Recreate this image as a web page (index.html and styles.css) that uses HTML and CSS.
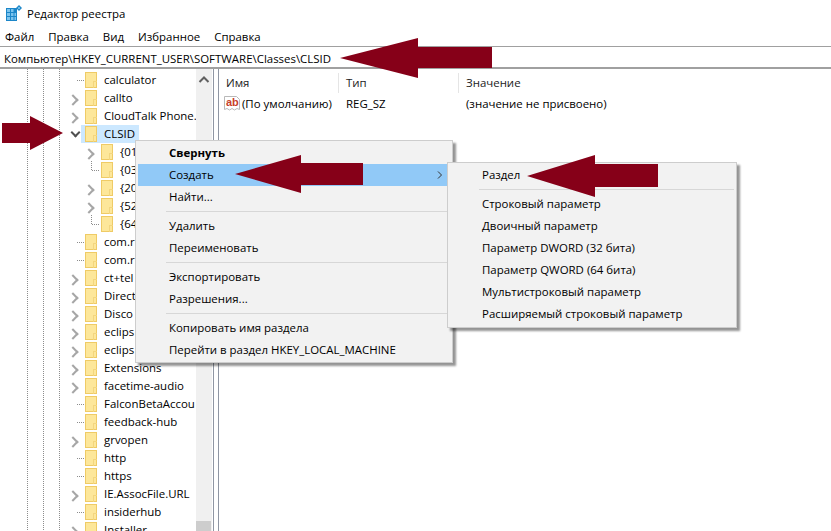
FILE: index.html
```html
<!DOCTYPE html>
<html lang="ru">
<head>
<meta charset="utf-8">
<title>Редактор реестра</title>
<link rel="stylesheet" href="styles.css">
</head>
<body>
<div class="app">
  <header class="titlebar">
    <svg class="appicon" width="16" height="16" viewBox="0 0 16 16"><path fill="#1c86c8" d="M0 3h11v13H0z"/><path fill="#7cc4ee" d="M1 4h3v3H1zM5 4h2.500v3H5zM1 8h3v3H1zM5 8h2.500v3H5zM8.500 8H10v3H8.500zM1 12h3v3H1zM5 12h2.500v3H5zM8.500 12H10v3H8.500z"/><path fill="#1c86c8" d="M13 0l3 3-3 3-3-3z"/><path fill="#8fd0f2" d="M13 1.700L14.300 3 13 4.300 11.700 3z"/></svg>
    <span>Редактор реестра</span>
  </header>
  <nav class="menubar"><span>Файл</span><span>Правка</span><span>Вид</span><span>Избранное</span><span>Справка</span></nav>
  <div class="address">Компьютер\HKEY_CURRENT_USER\SOFTWARE\Classes\CLSID</div>
  <main class="panes">
    <section class="tree">
      <div class="rows">
        <div class="row lvl0 leaf"><i class="folder"></i><span>calculator</span></div>
        <div class="row lvl0 more"><i class="folder"></i><span>callto</span></div>
        <div class="row lvl0 more"><i class="folder"></i><span>CloudTalk Phone.</span></div>
        <div class="row lvl0 open"><i class="folder"></i><span class="sel">CLSID</span></div>
        <div class="row lvl1 more"><i class="folder"></i><span>{01</span></div>
        <div class="row lvl1 leaf"><i class="folder"></i><span>{03</span></div>
        <div class="row lvl1 more"><i class="folder"></i><span>{20</span></div>
        <div class="row lvl1 more"><i class="folder"></i><span>{52</span></div>
        <div class="row lvl1 leaf"><i class="folder"></i><span>{64</span></div>
        <div class="row lvl0 leaf"><i class="folder"></i><span>com.r</span></div>
        <div class="row lvl0 leaf"><i class="folder"></i><span>com.r</span></div>
        <div class="row lvl0 more"><i class="folder"></i><span>ct+tel</span></div>
        <div class="row lvl0 more"><i class="folder"></i><span>Direct</span></div>
        <div class="row lvl0 more"><i class="folder"></i><span>Disco</span></div>
        <div class="row lvl0 more"><i class="folder"></i><span>eclips</span></div>
        <div class="row lvl0 more"><i class="folder"></i><span>eclips</span></div>
        <div class="row lvl0 more"><i class="folder"></i><span>Extensions</span></div>
        <div class="row lvl0 more"><i class="folder"></i><span>facetime-audio</span></div>
        <div class="row lvl0 leaf"><i class="folder"></i><span>FalconBetaAccou</span></div>
        <div class="row lvl0 leaf"><i class="folder"></i><span>feedback-hub</span></div>
        <div class="row lvl0 more"><i class="folder"></i><span>grvopen</span></div>
        <div class="row lvl0 leaf"><i class="folder"></i><span>http</span></div>
        <div class="row lvl0 leaf"><i class="folder"></i><span>https</span></div>
        <div class="row lvl0 more"><i class="folder"></i><span>IE.AssocFile.URL</span></div>
        <div class="row lvl0 leaf"><i class="folder"></i><span>insiderhub</span></div>
        <div class="row lvl0 more"><i class="folder"></i><span>Installer</span></div>
      </div>
      <div class="scrollbar">
        <svg width="16" height="16" viewBox="0 0 16 16"><path d="M3.500 10L8 5.500 12.500 10" fill="none" stroke="#606060" stroke-width="2"/></svg>
        <div class="thumb"></div>
      </div>
    </section>
    <div class="splitter"></div>
    <section class="list">
      <div class="listhead"><span class="c1">Имя</span><span class="c2">Тип</span><span class="c3">Значение</span></div>
      <div class="listrow">
        <span class="c1 name"><svg width="16" height="16" viewBox="0 0 16 16"><path d="M.5 .5h12l3 3v10l-2.500-1-2.500 1.500-2.500-1.500-2.500 1.500-2.500-1.500-2.500 1z" fill="#fff" stroke="#b9b9b9"/></svg><b class="ab">ab</b>(По умолчанию)</span>
        <span class="c2">REG_SZ</span>
        <span class="c3">(значение не присвоено)</span>
      </div>
    </section>
  </main>
</div>

<div class="menu ctx">
  <div class="mi strong">Свернуть</div>
  <div class="mi hot">Создать<svg class="sub" width="6" height="8" viewBox="0 0 6 8"><path d="M1 .5L4.500 4 1 7.500" fill="none" stroke="#333" stroke-width="1"/></svg></div>
  <div class="mi">Найти...</div>
  <div class="sep"></div>
  <div class="mi">Удалить</div>
  <div class="mi">Переименовать</div>
  <div class="sep"></div>
  <div class="mi">Экспортировать</div>
  <div class="mi">Разрешения...</div>
  <div class="sep"></div>
  <div class="mi">Копировать имя раздела</div>
  <div class="mi">Перейти в раздел HKEY_LOCAL_MACHINE</div>
</div>

<div class="menu submenu">
  <div class="mi">Раздел</div>
  <div class="sep"></div>
  <div class="mi">Строковый параметр</div>
  <div class="mi">Двоичный параметр</div>
  <div class="mi">Параметр DWORD (32 бита)</div>
  <div class="mi">Параметр QWORD (64 бита)</div>
  <div class="mi">Мультистроковый параметр</div>
  <div class="mi">Расширяемый строковый параметр</div>
</div>

<svg class="arrows" width="831" height="531" viewBox="0 0 831 531">
  <path d="M340 58L418 38V47H492V68H418V78Z"/>
  <path d="M63 133L30 116V123H2V143H30V150Z"/>
  <path d="M235 174L301 155V163H363V185H301V193Z"/>
  <path d="M527 176L595 155V164H658V187H595V197Z"/>
</svg>
</body>
</html>
```

FILE: styles.css
```css
* { box-sizing: border-box; }
html, body { margin: 0; height: 100%; overflow: hidden; background: #fff; }
body { font: 11.45px/18px "Open Sans", "Noto Sans", sans-serif; color: #000; }

.app { display: flex; flex-direction: column; width: 831px; height: 531px; }
.titlebar { display: flex; align-items: center; gap: 5px; height: 28px; padding: 0 0 2px 6px; }
.titlebar span { position: relative; top: 1px; }
.menubar { display: flex; gap: 14px; height: 18px; padding-left: 5px; }
.address { height: 23px; padding: 2px 0 0 4px; border-top: 1px solid #a0a0a0; border-bottom: 2px solid #a0a0a0; line-height: 19px; white-space: nowrap; }

.panes { flex: 1; display: flex; min-height: 0; }
.tree { position: relative; width: 212px; display: flex; overflow: hidden; }
.rows {
  width: 196px; padding-top: 2px; overflow: hidden;
  background-image:
    linear-gradient(#8c8c8c 50%, transparent 50%),
    linear-gradient(#8c8c8c 50%, transparent 50%),
    linear-gradient(#8c8c8c 50%, transparent 50%);
  background-size: 1px 2px;
  background-position: 27px 0, 43px 0, 59px 0;
  background-repeat: repeat-y;
}
.row { position: relative; display: flex; align-items: center; height: 18px; white-space: nowrap; }
.lvl0 { padding-left: 85px; }
.lvl1 { padding-left: 101px; }
.folder {
  position: relative; flex: none; width: 12px; height: 16px; margin-right: 6px;
  background: #fde79a; border: 1px solid #efcb66;
}
.folder::after {
  content: ""; position: absolute; right: -1px; bottom: -1px; width: 3px; height: 6px;
  border-left: 1px solid #f3d67f; border-top: 1px solid #f3d67f;
}
.row > span { padding: 0 1px; height: 18px; margin-left: 0; }
.sel { background: #cce8ff; padding: 0 4px 0 1px !important; }
.open::before { content: ""; position: absolute; top: 0; left: 81px; width: 24px; height: 18px; background: #cce8ff; }
.open > * { position: relative; }
.leaf::before {
  content: ""; position: absolute; left: 77px; top: 9px; width: 7px; height: 1px;
  background: repeating-linear-gradient(90deg, #8c8c8c 0 1px, transparent 1px 2px);
}
.lvl1.leaf::before { left: 92px; }
.lvl1.leaf::after {
  content: ""; position: absolute; left: 91px; top: 0; width: 1px; height: 10px;
  background: repeating-linear-gradient(#8c8c8c 0 1px, transparent 1px 2px);
}
.more::before {
  content: ""; position: absolute; left: 69px; top: 7px; width: 6px; height: 6px;
  border-top: 2px solid #a6a6a6; border-right: 2px solid #a6a6a6; transform: rotate(45deg);
}
.lvl1.more::before { left: 85px; }
.open::after {
  content: ""; position: absolute; left: 72px; top: 4px; width: 5px; height: 5px;
  border-bottom: 2px solid #505050; border-right: 2px solid #505050; transform: rotate(45deg);
}
.scrollbar { position: relative; width: 16px; background: #f0f0f0; padding-top: 3px; }
.scrollbar svg { display: block; }
.thumb { position: absolute; left: 0; right: 1px; bottom: 0; height: 10px; background: #cdcdcd; }
.splitter { width: 6px; border-left: 1px solid #8f96a3; border-right: 1px solid #8f96a3; margin-left: 1px; }

.list { flex: 1; min-width: 0; }
.listhead, .listrow { display: flex; height: 20px; align-items: center; }
.listhead { height: 24px; padding-top: 4px; color: #222; }
.listhead span { height: 20px; line-height: 20px; border-right: 1px solid #e5e5e5; padding-left: 7px; }
.listhead .c3 { border: 0; }
.listrow { height: 21px; margin-top: 0; }
.listrow span { padding-left: 7px; }
.c1 { width: 120px; flex: none; }
.c2 { width: 120px; flex: none; }
.c3 { flex: 1; }
.name { position: relative; display: flex; align-items: center; white-space: nowrap; padding-left: 5px !important; }
.name svg { flex: none; margin-right: 2px; }
.ab { position: absolute; left: 7px; top: 0; font: 700 11px/15px "Liberation Sans", sans-serif; color: #c8402a; }

.menu { position: absolute; background: #f2f2f2; border: 1px solid #cdcdcd; box-shadow: 3px 3px 2px rgba(0, 0, 0, .42); padding: 1px 2px; }
.mi { position: relative; height: 22px; line-height: 21px; padding-left: 31px; white-space: nowrap; }
.strong { font-weight: 700; }
.hot { background: #91c9f7; }
.sub { position: absolute; right: 7px; top: 7px; }
.sep { margin: 3px 0 3px 28px; height: 1px; background: #d7d7d7; }
.ctx { left: 135px; top: 140px; width: 318px; height: 223px; }
.submenu { left: 447px; top: 162px; width: 290px; height: 166px; }
.submenu .mi { padding-left: 32px; }
.submenu .sep { margin-left: 29px; }

.arrows { position: absolute; left: 0; top: 0; pointer-events: none; }
.arrows path { fill: #860018; }
```
